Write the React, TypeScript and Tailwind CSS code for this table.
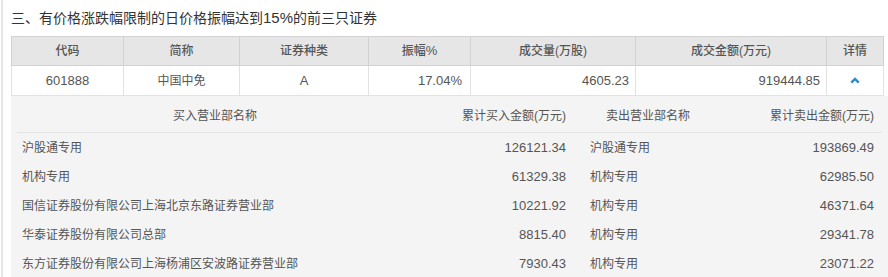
import React from 'react'

const font = { fontFamily: '"Liberation Sans", Arial, "Noto Sans CJK SC", sans-serif' }

const details = [
  ['沪股通专用', '126121.34', '沪股通专用', '193869.49'],
  ['机构专用', '61329.38', '机构专用', '62985.50'],
  ['国信证券股份有限公司上海北京东路证券营业部', '10221.92', '机构专用', '46371.64'],
  ['华泰证券股份有限公司总部', '8815.40', '机构专用', '29341.78'],
  ['东方证券股份有限公司上海杨浦区安波路证券营业部', '7930.43', '机构专用', '23071.22'],
]

export default function App() {
  return (
    <div className="w-[888px] h-[277px] bg-white overflow-hidden" style={font}>
      <div className="ml-px h-full border-l-2 border-[#e6e6e6] pl-2">
        <h3 className="h-9 leading-[36px] text-[14px] text-[#333]">三、有价格涨跌幅限制的日价格振幅达到<span className="text-[15px]">15%</span>的前三只证券</h3>
        <div className="w-[873px] text-[12px] text-[#555]">
          <div className="flex h-[30px] bg-[#e6e6e6] border border-[#d2d2d2] font-medium text-[#555]">
            <div className="w-[112px] flex items-center justify-center border-r border-[#d2d2d2]">代码</div>
            <div className="w-[116px] flex items-center justify-center border-r border-[#d2d2d2]">简称</div>
            <div className="w-[129px] flex items-center justify-center border-r border-[#d2d2d2]">证券种类</div>
            <div className="w-[102px] flex items-center justify-center border-r border-[#d2d2d2]">振幅<span className="text-[13px]">%</span></div>
            <div className="w-[165px] flex items-center justify-center border-r border-[#d2d2d2]">成交量(万股)</div>
            <div className="w-[191px] flex items-center justify-center border-r border-[#d2d2d2]">成交金额(万元)</div>
            <div className="flex-1 flex items-center justify-center">详情</div>
          </div>
          <div className="flex h-[30px] border-x border-b border-[#e2e2e2] text-[13px]">
            <div className="w-[112px] flex items-center justify-center border-r border-[#e2e2e2]">601888</div>
            <div className="w-[116px] flex items-center justify-center border-r border-[#e2e2e2] text-[12px]">中国中免</div>
            <div className="w-[129px] flex items-center justify-center border-r border-[#e2e2e2]">A</div>
            <div className="w-[102px] flex items-center justify-end pr-2 border-r border-[#e2e2e2]">17.04%</div>
            <div className="w-[165px] flex items-center justify-end pr-[6px] border-r border-[#e2e2e2]">4605.23</div>
            <div className="w-[191px] flex items-center justify-end pr-[6px] border-r border-[#e2e2e2]">919444.85</div>
            <div className="flex-1 flex items-center justify-center">
              <svg width="10" height="7" viewBox="0 0 10 7">
                <path d="M1.3 5.6 L5 2 L8.7 5.6" fill="none" stroke="#2a8ad4" strokeWidth="2.4" />
              </svg>
            </div>
          </div>
          <div className="w-[877px] bg-[#f4f4f4] px-[6px] pt-[4px]">
            <div className="flex h-[33px] items-center border-b border-[#e3e3e3]">
              <div className="w-[396px] text-center">买入营业部名称</div>
              <div className="w-[153px] text-right">累计买入金额(万元)</div>
              <div className="w-[140px] text-center pl-[24px]">卖出营业部名称</div>
              <div className="w-[168px] text-right">累计卖出金额(万元)</div>
            </div>
            {details.map((r, i) => (
              <div key={i} className="flex h-[29px] items-center pt-px">
                <div className="w-[396px] pl-[5px]">{r[0]}</div>
                <div className="w-[153px] text-right text-[13px]">{r[1]}</div>
                <div className="w-[140px] pl-[24px]">{r[2]}</div>
                <div className="w-[168px] text-right text-[13px]">{r[3]}</div>
              </div>
            ))}
          </div>
        </div>
      </div>
    </div>
  )
}
